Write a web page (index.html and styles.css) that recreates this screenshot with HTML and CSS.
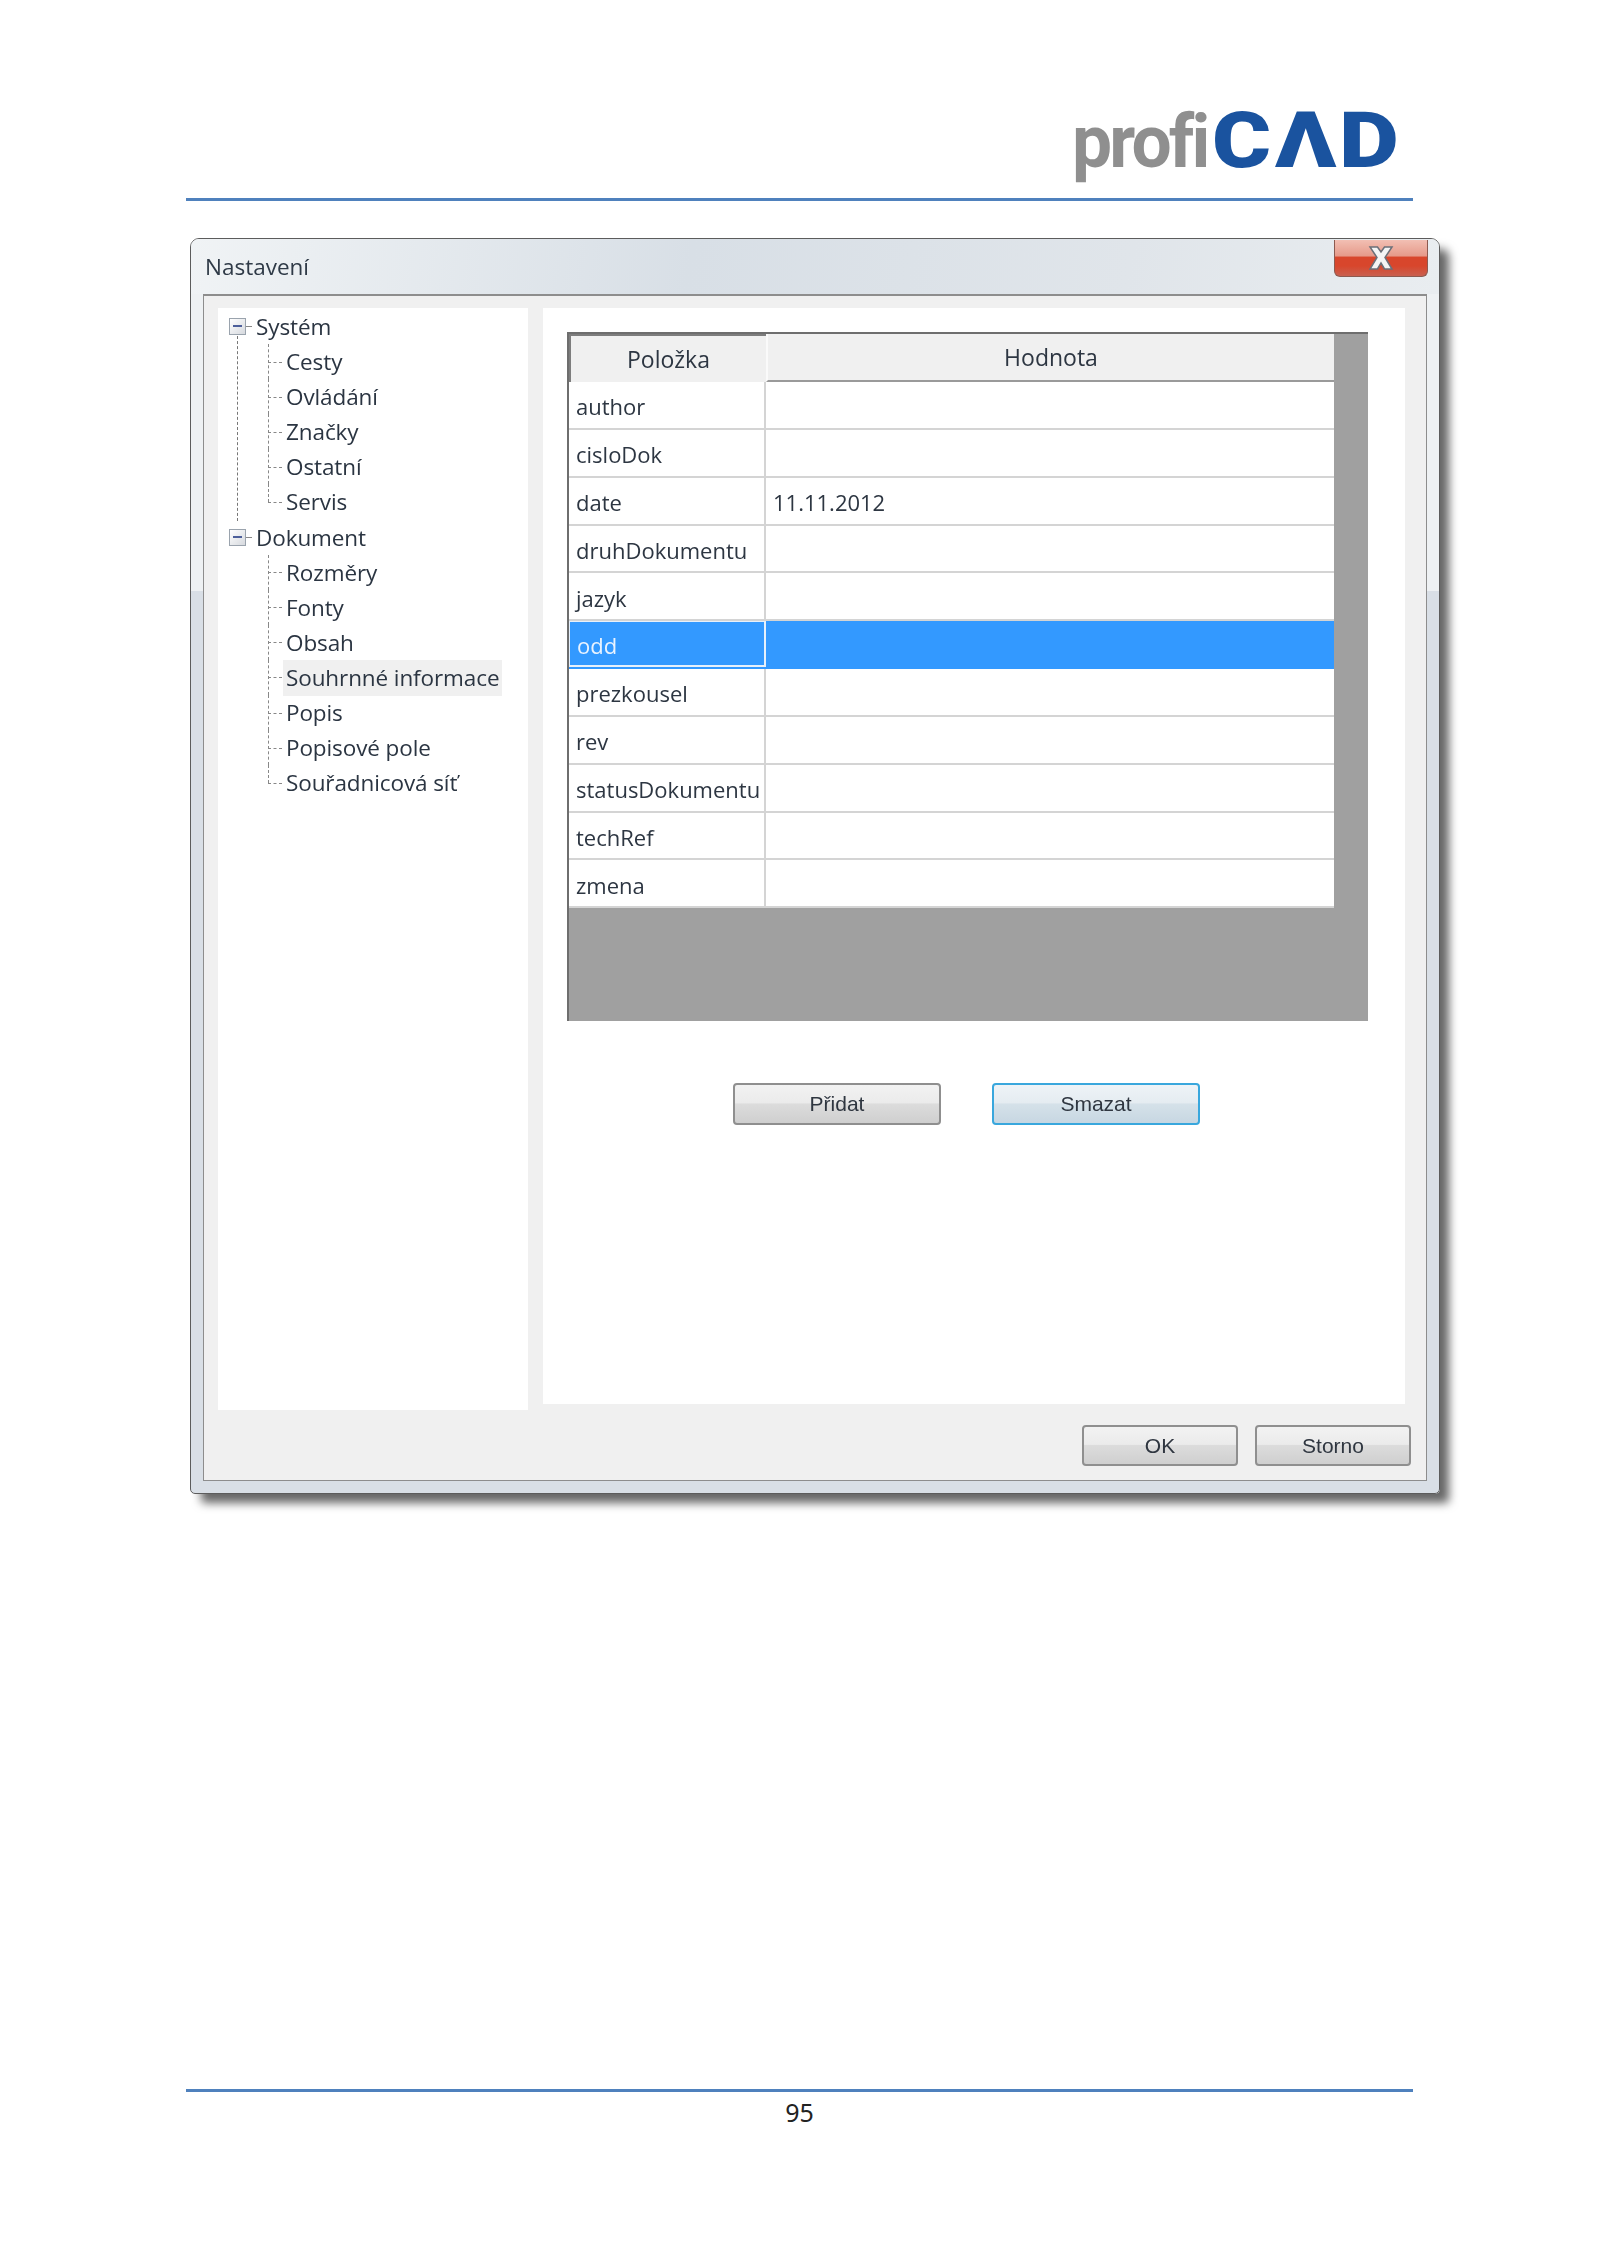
FILE: index.html
```html
<!DOCTYPE html>
<html lang="cs">
<head>
<meta charset="utf-8">
<title>ProfiCAD 95</title>
<link rel="stylesheet" href="styles.css">
</head>
<body>
<div class="page">
  <header class="page-head">
    <div class="logo" role="img" aria-label="proficad">
      <span class="logo-grey">profi</span>
      <span class="logo-blue logo-c">C</span>
      <span class="logo-blue logo-a">Λ</span>
      <span class="logo-blue logo-d">D</span>
    </div>
  </header>
  <hr class="rule">

  <section class="dialog">
    <div class="titlebar">
      <span class="title">Nastavení</span>
      <div class="close">
        <svg width="28" height="24" viewBox="0 0 28 24">
          <path class="close-x" d="M3 1h7.500l3.500 5 3.500-5H25l-7 10.500L25 23h-7.500L14 17l-3.500 6H3l7-11.500z"/>
        </svg>
      </div>
    </div>
    <div class="client">
      <div class="panels">
        <nav class="tree">
          <ul class="roots">
            <li class="root">
              <div class="root-row"><span class="box"></span><span class="dash"></span><span>Systém</span></div>
              <ul class="kids">
                <li>Cesty</li>
                <li>Ovládání</li>
                <li>Značky</li>
                <li>Ostatní</li>
                <li>Servis</li>
              </ul>
            </li>
            <li class="root">
              <div class="root-row"><span class="box"></span><span class="dash"></span><span>Dokument</span></div>
              <ul class="kids">
                <li>Rozměry</li>
                <li>Fonty</li>
                <li>Obsah</li>
                <li><span class="selected">Souhrnné informace</span></li>
                <li>Popis</li>
                <li>Popisové pole</li>
                <li>Souřadnicová síť</li>
              </ul>
            </li>
          </ul>
        </nav>
        <main class="content">
          <div class="grid">
            <div class="row head">
              <div class="cell sunken">Položka</div>
              <div class="cell raised">Hodnota</div>
            </div>
            <div class="row"><div class="cell key">author</div><div class="cell"></div></div>
            <div class="row"><div class="cell key">cisloDok</div><div class="cell"></div></div>
            <div class="row"><div class="cell key">date</div><div class="cell">11.11.2012</div></div>
            <div class="row"><div class="cell key">druhDokumentu</div><div class="cell"></div></div>
            <div class="row"><div class="cell key">jazyk</div><div class="cell"></div></div>
            <div class="row current"><div class="cell key">odd</div><div class="cell"></div></div>
            <div class="row"><div class="cell key">prezkousel</div><div class="cell"></div></div>
            <div class="row"><div class="cell key">rev</div><div class="cell"></div></div>
            <div class="row"><div class="cell key">statusDokumentu</div><div class="cell"></div></div>
            <div class="row"><div class="cell key">techRef</div><div class="cell"></div></div>
            <div class="row"><div class="cell key">zmena</div><div class="cell"></div></div>
          </div>
          <div class="grid-actions">
            <button class="btn wide" type="button">Přidat</button>
            <button class="btn wide focus" type="button">Smazat</button>
          </div>
        </main>
      </div>
      <div class="actions">
        <button class="btn" type="button">OK</button>
        <button class="btn" type="button">Storno</button>
      </div>
    </div>
  </section>

  <footer class="page-foot">
    <hr class="rule">
    <div class="page-num">95</div>
  </footer>
</div>
</body>
</html>
```
FILE: styles.css
```css
* { box-sizing: border-box; }
html, body { margin: 0; padding: 0; background: #fff; }
ul { list-style: none; margin: 0; padding: 0; }

.page {
  width: 1600px;
  height: 2262px;
  padding: 0 187px 0 186px;
  font-family: "Open Sans", "Noto Sans", sans-serif;
  overflow: hidden;
}

.page-head {
  height: 198px;
  display: flex;
  justify-content: flex-end;
  padding: 99px 16px 0 0;
}
.logo {
  display: flex;
  height: 84px;
  filter: blur(.7px);
  font-family: "Roboto", sans-serif;
}
.logo span { display: block; height: 84px; white-space: nowrap; }
.logo-grey {
  width: 140px;
  font-size: 75px;
  font-weight: 700;
  line-height: 84px;
  letter-spacing: -3px;
  color: #8f8f8f;
  transform: scaleX(.95);
  transform-origin: left;
}
.logo-blue {
  font-size: 77px;
  font-weight: 900;
  line-height: 84px;
  color: #1a539f;
  transform-origin: left;
}
.logo-c { width: 63px; transform: scaleX(1.17); }
.logo-a { width: 64px; transform: scaleX(1.24); }
.logo-d { width: 58px; transform: scaleX(1.2); }

.rule {
  display: block;
  margin: 0;
  height: 3px;
  border: 0;
  background: #4f81bd;
}

/* dialog window */
.dialog {
  width: 1250px;
  height: 1256px;
  margin: 37px 0 0 4px;
  display: flex;
  flex-direction: column;
  padding: 0 12px 13px;
  border: 1px solid #5c5c5c;
  border-radius: 9px 9px 5px 5px;
  background: linear-gradient(to bottom, #eef1f3 0, #eef1f3 352px, #d9dfe6 352px);
  box-shadow: 10px 10px 10px -1px rgba(0, 0, 0, .6);
  color: #333;
  font-size: 22px;
  filter: blur(.55px);
}
.titlebar {
  height: 55px;
  margin: 0 -12px;
  padding: 1px 11px 0 14px;
  display: flex;
  justify-content: space-between;
  align-items: flex-start;
  border-radius: 8px 8px 0 0;
  background: linear-gradient(100deg, #f0f3f5 0, #d8dfe6 40%, #e0e5ea 75%, #e9edf0 100%);
}
.title { font-size: 22.500px; line-height: 54px; color: #2f3a47; }
.close {
  width: 94px;
  height: 37px;
  display: flex;
  justify-content: center;
  align-items: center;
  border: 1px solid #8c5a50;
  border-top: 0;
  border-radius: 0 0 6px 6px;
  background: linear-gradient(to bottom, #f2bfb3 0, #e69a8a 44%, #d8462c 48%, #d8462c 72%, #c9604f 100%);
}
.close-x { fill: #f4f4f4; stroke: #6b6f78; stroke-width: 1.500; }

.client {
  flex: 1;
  display: flex;
  flex-direction: column;
  background: #f0f0f0;
  border: 1px solid #8d8d8d;
  border-top-width: 2px;
  padding: 12px 15px 14px 14px;
}
.panels { display: flex; align-items: flex-start; gap: 15px; }

/* tree */
.tree {
  width: 310px;
  height: 1102px;
  flex: none;
  padding: 1px 0 0 11px;
  background: #fff;
  font-size: 22.500px;
  letter-spacing: -.1px;
  color: #2b3542;
}
.root { position: relative; }
.root:first-child::after {
  content: "";
  position: absolute;
  left: 8px;
  top: 27px;
  height: 185px;
  border-left: 1px dashed #777;
}
.root-row { height: 35.100px; display: flex; align-items: center; }
.box {
  position: relative;
  width: 17px;
  height: 17px;
  border: 1px solid #9aa3ad;
  background: linear-gradient(135deg, #fff, #d6d9de);
}
.box::after {
  content: "";
  position: absolute;
  left: 3px;
  right: 3px;
  top: 6px;
  height: 2px;
  background: #4d5f9a;
}
.dash { width: 6px; margin: 0 4px 0 0; border-top: 1px dashed #888; }
.kids { margin-left: 39px; }
.kids li {
  position: relative;
  height: 35.100px;
  line-height: 35px;
  padding-left: 18px;
  white-space: nowrap;
}
.kids li::before {
  content: "";
  position: absolute;
  left: 0;
  top: 50%;
  width: 14px;
  border-top: 1px dashed #888;
}
.kids li::after {
  content: "";
  position: absolute;
  left: 0;
  top: 0;
  height: 100%;
  border-left: 1px dashed #888;
}
.kids li:last-child::after { height: 50%; }
.selected {
  display: inline-block;
  margin-left: -3px;
  padding: 0 3px;
  height: 36px;
  background: #f0f0f0;
}

/* property grid */
.content {
  width: 862px;
  height: 1096px;
  flex: none;
  padding: 24px 0 0 24px;
  background: #fff;
}
.grid {
  width: 801px;
  height: 689px;
  background: #a0a0a0;
  border-top: 2px solid #6e6e6e;
  border-left: 2px solid #6e6e6e;
}
.row {
  display: grid;
  grid-template-columns: 197px 568px;
  width: 765px;
  height: 47.850px;
  background: #fff;
  border-bottom: 2px solid #d4d4d4;
}
.cell {
  padding: 3px 0 0 7px;
  display: flex;
  align-items: center;
  border-right: 2px solid #d4d4d4;
  color: #2d3642;
  white-space: nowrap;
}
.cell:last-child { border-right: 0; }
.head { height: 48px; background: #f0f0f0; border-bottom: 0; }
.head .cell { justify-content: center; padding: 0; border: 0; font-size: 23px; }
.sunken { border-top: 2px solid #7d7d7d !important; border-left: 2px solid #7d7d7d !important; }
.raised { border-left: 2px solid #fafafa !important; border-bottom: 2px solid #9a9a9a !important; }
.current { background: #3399ff; border-bottom-color: #3399ff; }
.current .key { color: #eaf3ff; border: 2px solid #e6f0fb; border-top-width: 1px; border-left-width: 1px; }

.grid-actions {
  display: flex;
  gap: 51px;
  margin: 62px 0 0 166px;
}
.actions {
  display: flex;
  justify-content: flex-end;
  gap: 17px;
  margin-top: 15px;
}
.btn {
  width: 156px;
  height: 41px;
  padding: 0;
  border: 2px solid #8f8f8f;
  border-radius: 4px;
  background: linear-gradient(to bottom, #f2f2f2 0, #ebebeb 47%, #dcdcdc 50%, #cfcfcf 100%);
  font-family: "Liberation Sans", Arial, sans-serif;
  font-size: 21px;
  color: #2f3640;
}
.wide { width: 208px; height: 42px; }
.focus {
  border-color: #39a7dd;
  background: linear-gradient(to bottom, #eef3f7 0, #e5ecf1 47%, #d5e1e9 50%, #c7d7e2 100%);
}

.page-foot { margin-top: 595px; }
.page-num {
  margin-top: 2px;
  text-align: center;
  font-size: 25px;
  line-height: 36px;
  color: #222;
  font-family: "Noto Sans", sans-serif;
}
```
